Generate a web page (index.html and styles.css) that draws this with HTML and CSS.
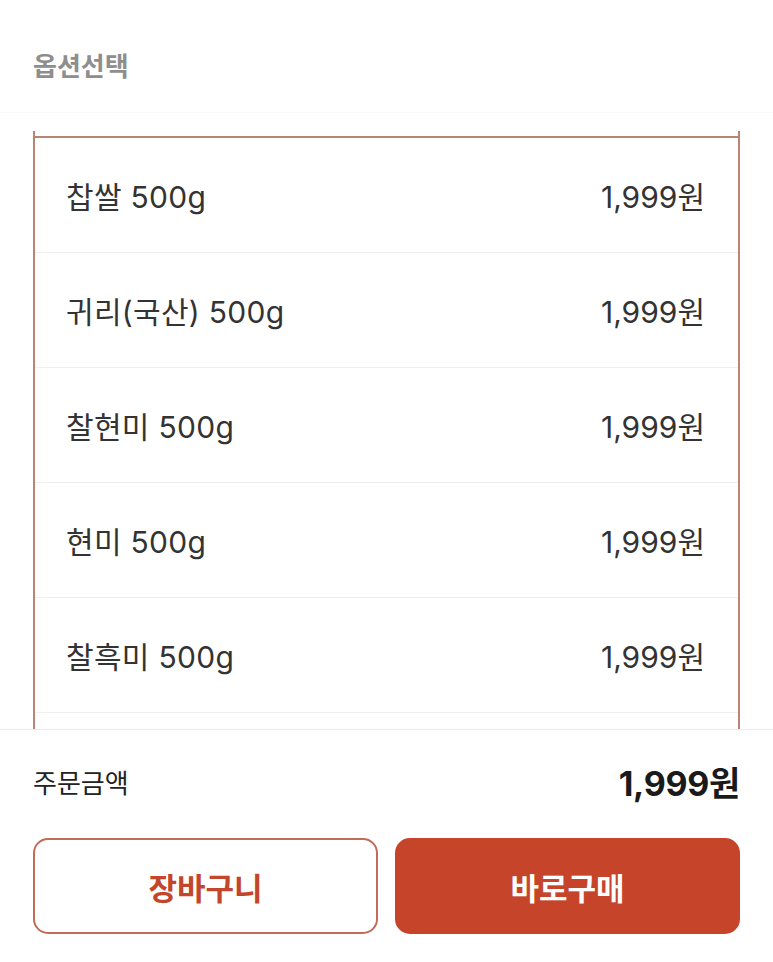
FILE: index.html
```html
<!DOCTYPE html>
<html lang="ko">
<head>
<meta charset="utf-8">
<link rel="stylesheet" href="styles.css">
</head>
<body>
<div class="page">
  <header class="head">
    <h2 class="title">옵션선택</h2>
  </header>
  <div class="scroll">
    <div class="list">
      <ul class="options">
        <li class="opt"><span class="name">찹쌀 500g</span><span class="price">1,999원</span></li>
        <li class="opt"><span class="name">귀리(국산) 500g</span><span class="price">1,999원</span></li>
        <li class="opt"><span class="name">찰현미 500g</span><span class="price">1,999원</span></li>
        <li class="opt"><span class="name">현미 500g</span><span class="price">1,999원</span></li>
        <li class="opt"><span class="name">찰흑미 500g</span><span class="price">1,999원</span></li>
        <li class="opt"></li>
      </ul>
    </div>
  </div>
  <footer class="panel">
    <div class="sum">
      <span class="sum-label">주문금액</span>
      <span class="sum-value">1,999원</span>
    </div>
    <div class="actions">
      <button class="btn btn-outline">장바구니</button>
      <button class="btn btn-fill">바로구매</button>
    </div>
  </footer>
</div>
</body>
</html>
```
FILE: styles.css
```css
* { box-sizing: border-box; }
html, body { margin: 0; padding: 0; background: #fff; }
body {
  font-family: Inter, "Noto Sans CJK KR", sans-serif;
  color: #333;
  width: 773px;
  height: 962px;
  overflow: hidden;
}
.page { display: flex; flex-direction: column; height: 962px; }
.head {
  height: 113px;
  padding: 47px 33px 0;
  border-bottom: 1px solid #f8f8f8;
}
.title {
  margin: 0;
  font-size: 26px;
  line-height: 40px;
  font-weight: 700;
  color: #8e8e8e;
}
.scroll {
  margin-top: 18px;
  height: 598px;
  overflow: hidden;
  padding: 0 33px;
}
.list {
  border-left: 2px solid #b98474;
  border-right: 2px solid #b98474;
  padding-top: 5px;
  height: 100%;
}
.options {
  list-style: none;
  margin: 0;
  padding: 0;
  border-top: 2px solid #b98474;
}
.opt {
  display: flex;
  justify-content: space-between;
  align-items: center;
  height: 115px;
  padding: 0 33px 0 31px;
  border-bottom: 1px solid #efefef;
  font-size: 30px;
  color: #333;
}
.name { letter-spacing: 0.3px; }
.panel {
  border-top: 1px solid #ececec;
  padding: 28px 33px 0;
  flex: 1;
}
.sum {
  display: flex;
  justify-content: space-between;
  align-items: center;
  padding: 2px 0;
}
.sum-label { font-size: 26px; color: #222; line-height: 48px; }
.sum-value { font-size: 34px; font-weight: 700; color: #1a1a1a; line-height: 48px; letter-spacing: -0.3px; }
.actions {
  display: flex;
  gap: 17px;
  margin-top: 28px;
}
.btn {
  flex: 1;
  height: 96px;
  border-radius: 15px;
  font-family: inherit;
  font-size: 31px;
  font-weight: 700;
}
.btn-outline {
  background: #fff;
  border: 2px solid #c26b57;
  color: #c2452c;
}
.btn-fill {
  background: #c5442a;
  border: 2px solid #c5442a;
  color: #fff;
}
```
